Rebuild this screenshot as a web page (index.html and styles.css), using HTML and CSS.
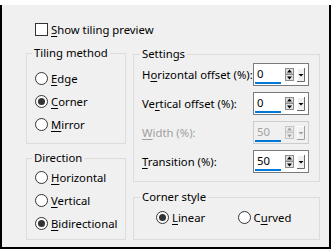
FILE: index.html
```html
<!DOCTYPE html>
<html lang="en">
<head>
    <meta charset="UTF-8">
    <meta name="viewport" content="width=device-width, initial-scale=1.0">
    <title>Tiling</title>
    <link rel="stylesheet" href="styles.css">
</head>
<body>
    <div class="dialog">
        <div class="check">
            <span class="box"></span>
            <span><u>S</u>how tiling preview</span>
        </div>

        <div class="columns">
            <div class="col">
                <fieldset class="group tiling">
                    <legend>Tiling method</legend>
                    <div class="inner">
                        <div class="radio"><span class="mark"></span><span><u>E</u>dge</span></div>
                        <div class="radio on"><span class="mark"></span><span><u>C</u>orner</span></div>
                        <div class="radio"><span class="mark"></span><span><u>M</u>irror</span></div>
                    </div>
                </fieldset>

                <fieldset class="group direction">
                    <legend>Direction</legend>
                    <div class="inner">
                        <div class="radio"><span class="mark"></span><span><u>H</u>orizontal</span></div>
                        <div class="radio"><span class="mark"></span><span><u>V</u>ertical</span></div>
                        <div class="radio on"><span class="mark"></span><span><u>B</u>idirectional</span></div>
                    </div>
                </fieldset>
            </div>

            <div class="col">
                <fieldset class="group settings">
                    <legend>Settings</legend>
                    <div class="inner">
                        <div class="field">
                            <span>H<u>o</u>rizontal offset (%):</span>
                            <div class="spin">
                                <span class="edit">0</span>
                                <svg class="updown" width="9" height="13" viewBox="0 0 9 13">
                                    <rect x="0.5" y="0.5" width="8" height="5.5" fill="#e1e1e1" stroke="#8c8c8c"/>
                                    <rect x="0.5" y="6.5" width="8" height="6" fill="#e1e1e1" stroke="#8c8c8c"/>
                                    <polygon points="4.5,1.5 2,4.5 7,4.5" fill="#000"/>
                                    <polygon points="2,8.5 7,8.5 4.5,11.5" fill="#000"/>
                                </svg>
                                <svg class="drop" width="8" height="14" viewBox="0 0 8 14">
                                    <rect x="0" y="0" width="8" height="14" fill="#f0f0f0"/>
                                    <path d="M0.5 13.5V0.5H7.5" stroke="#fff" fill="none"/>
                                    <path d="M0 13.5H7.5V0" stroke="#696969" fill="none"/>
                                    <polygon points="1.5,6 6.5,6 4,8.5" fill="#000"/>
                                </svg>
                            </div>
                        </div>
                        <div class="field">
                            <span>Ve<u>r</u>tical offset (%):</span>
                            <div class="spin">
                                <span class="edit">0</span>
                                <svg class="updown" width="9" height="13" viewBox="0 0 9 13">
                                    <rect x="0.5" y="0.5" width="8" height="5.5" fill="#e1e1e1" stroke="#8c8c8c"/>
                                    <rect x="0.5" y="6.5" width="8" height="6" fill="#e1e1e1" stroke="#8c8c8c"/>
                                    <polygon points="4.5,1.5 2,4.5 7,4.5" fill="#000"/>
                                    <polygon points="2,8.5 7,8.5 4.5,11.5" fill="#000"/>
                                </svg>
                                <svg class="drop" width="8" height="14" viewBox="0 0 8 14">
                                    <rect x="0" y="0" width="8" height="14" fill="#f0f0f0"/>
                                    <path d="M0.5 13.5V0.5H7.5" stroke="#fff" fill="none"/>
                                    <path d="M0 13.5H7.5V0" stroke="#696969" fill="none"/>
                                    <polygon points="1.5,6 6.5,6 4,8.5" fill="#000"/>
                                </svg>
                            </div>
                        </div>
                        <div class="field disabled">
                            <span><u>W</u>idth (%):</span>
                            <div class="spin">
                                <span class="edit">50</span>
                                <svg class="updown" width="9" height="13" viewBox="0 0 9 13">
                                    <rect x="0.5" y="0.5" width="8" height="5.5" fill="#ececec" stroke="#c4c4c4"/>
                                    <rect x="0.5" y="6.5" width="8" height="6" fill="#ececec" stroke="#c4c4c4"/>
                                    <polygon points="4.5,1.5 2,4.5 7,4.5" fill="#a0a0a0"/>
                                    <polygon points="2,8.5 7,8.5 4.5,11.5" fill="#a0a0a0"/>
                                </svg>
                                <svg class="drop" width="8" height="14" viewBox="0 0 8 14">
                                    <rect x="0" y="0" width="8" height="14" fill="#f0f0f0"/>
                                    <path d="M0.5 13.5V0.5H7.5" stroke="#fff" fill="none"/>
                                    <path d="M0 13.5H7.5V0" stroke="#a0a0a0" fill="none"/>
                                    <polygon points="1.5,6 6.5,6 4,8.5" fill="#a0a0a0"/>
                                </svg>
                            </div>
                        </div>
                        <div class="field">
                            <span><u>T</u>ransition (%):</span>
                            <div class="spin">
                                <span class="edit">50</span>
                                <svg class="updown" width="9" height="13" viewBox="0 0 9 13">
                                    <rect x="0.5" y="0.5" width="8" height="5.5" fill="#e1e1e1" stroke="#8c8c8c"/>
                                    <rect x="0.5" y="6.5" width="8" height="6" fill="#e1e1e1" stroke="#8c8c8c"/>
                                    <polygon points="4.5,1.5 2,4.5 7,4.5" fill="#000"/>
                                    <polygon points="2,8.5 7,8.5 4.5,11.5" fill="#000"/>
                                </svg>
                                <svg class="drop" width="8" height="14" viewBox="0 0 8 14">
                                    <rect x="0" y="0" width="8" height="14" fill="#f0f0f0"/>
                                    <path d="M0.5 13.5V0.5H7.5" stroke="#fff" fill="none"/>
                                    <path d="M0 13.5H7.5V0" stroke="#696969" fill="none"/>
                                    <polygon points="1.5,6 6.5,6 4,8.5" fill="#000"/>
                                </svg>
                            </div>
                        </div>
                    </div>
                </fieldset>

                <fieldset class="group corner">
                    <legend>Corner style</legend>
                    <div class="inner row">
                        <div class="radio on"><span class="mark"></span><span><u>L</u>inear</span></div>
                        <div class="radio"><span class="mark"></span><span>C<u>u</u>rved</span></div>
                    </div>
                </fieldset>
            </div>
        </div>
    </div>
</body>
</html>
```

FILE: styles.css
```css
body {
    margin: 0;
    background-color: #fff;
    font-family: "Noto Sans", sans-serif;
    font-size: 11.3px;
    color: #000;
}
u {
    text-decoration-thickness: 1px;
    text-underline-offset: 2px;
}
.dialog {
    margin-top: 5px;
    height: 244px;
    box-sizing: border-box;
    background-color: #f0f0f0;
    border: 2px solid #000;
    border-top: none;
    padding: 16px 10px 0 24px;
}
.check {
    display: flex;
    align-items: center;
    height: 16px;
    margin-left: 9px;
}
.check .box {
    width: 13px;
    height: 13px;
    box-sizing: border-box;
    border: 1px solid #333;
    background-color: #fff;
    margin-right: 3px;
}
.columns {
    display: grid;
    grid-template-columns: 100px 187px;
    column-gap: 7px;
    margin-top: 8px;
}
.col {
    display: flex;
    flex-direction: column;
}
.group {
    margin: 0;
    padding: 0;
    min-width: 0;
    border: 1px solid #dcdcdc;
}
.group legend {
    padding: 0 2px;
    margin-left: 5px;
    line-height: 16px;
}
.tiling .inner {
    padding: 6px 0 7px 8px;
}
.direction {
    margin-top: 6px;
}
.direction .inner {
    padding: 0 0 4px 8px;
}
.settings {
    margin-top: 1px;
}
.settings .inner {
    padding: 1px 10px 8px 8px;
}
.settings legend, .corner legend {
    margin-left: 6px;
}
.corner {
    margin-top: 7px;
}
.corner .inner {
    padding: 1px 0 10px 22px;
}
.radio {
    display: flex;
    align-items: center;
    height: 23px;
}
.radio .mark {
    width: 13px;
    height: 13px;
    box-sizing: border-box;
    border: 1px solid #333;
    border-radius: 50%;
    background-color: #fff;
    margin-right: 3px;
    display: flex;
    align-items: center;
    justify-content: center;
}
.radio.on .mark::after {
    content: "";
    width: 7px;
    height: 7px;
    border-radius: 50%;
    background-color: #333;
}
.row {
    display: flex;
}
.row .radio {
    width: 83px;
}
.field {
    display: flex;
    align-items: center;
    justify-content: space-between;
    height: 23px;
}
.field + .field {
    margin-top: 6px;
}
.spin {
    width: 56px;
    height: 23px;
    box-sizing: border-box;
    border: 1px solid #7a7a7a;
    background-color: #fff;
    display: flex;
    align-items: center;
}
.spin .edit {
    margin-left: 1px;
    width: 26px;
    height: 19px;
    box-sizing: border-box;
    border-bottom: 2px solid #0078d7;
    padding-left: 2px;
    line-height: 17px;
}
.spin .updown {
    margin-left: 4px;
}
.spin .drop {
    margin-left: 3px;
}
.disabled {
    color: #a0a0a0;
}
.disabled .spin {
    border-color: #cccccc;
    background-color: #f0f0f0;
}
```
